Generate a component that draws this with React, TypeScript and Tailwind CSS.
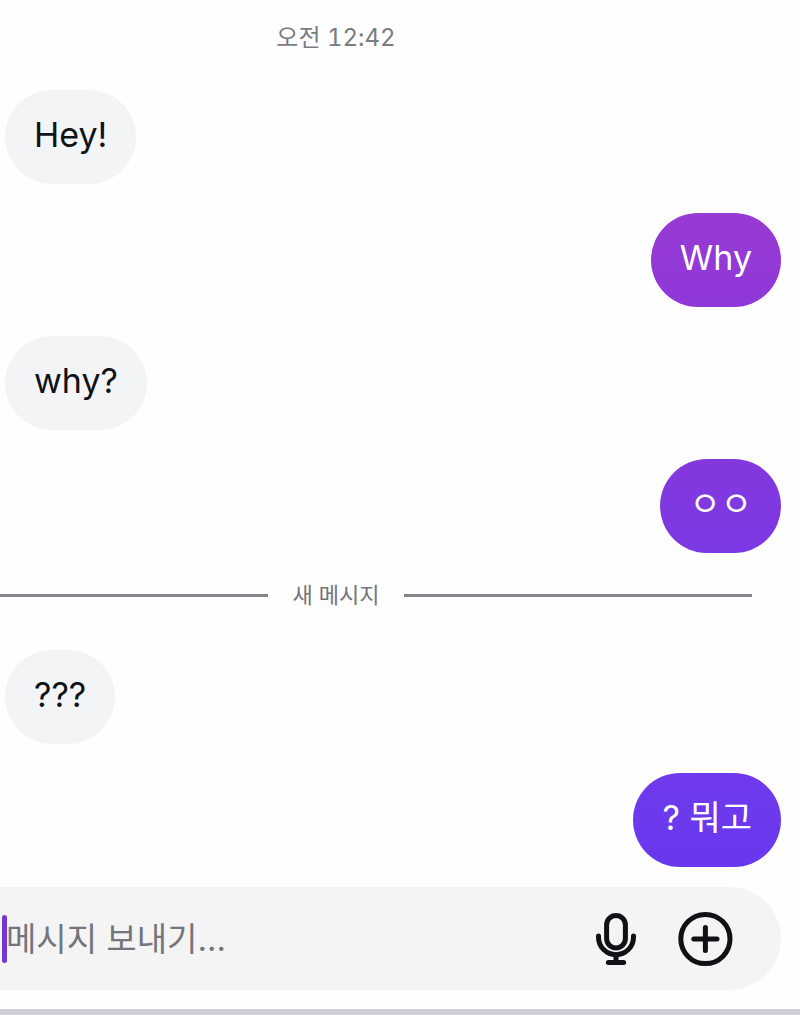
import { useState } from "react";
import clsx from "clsx";

type Message = {
    id: number;
    text: string;
    mine: boolean;
    color?: string;
};

const readMessages: Message[] = [
    { id: 1, text: "Hey!", mine: false },
    { id: 2, text: "Why", mine: true, color: "from-[#983ad3] to-[#8e38d9]" },
    { id: 3, text: "why?", mine: false },
    { id: 4, text: "ㅇㅇ", mine: true, color: "from-[#8438de] to-[#7c38e4]" },
];

const newMessages: Message[] = [
    { id: 5, text: "???", mine: false },
    { id: 6, text: "? 뭐고", mine: true, color: "from-[#703aec] to-[#6838ee]" },
];

export default function App() {
    const [draft, setDraft] = useState("");

    return (
        <main className="overflow-hidden bg-[#fefefe] font-[Inter,'Noto_Sans_CJK_KR',sans-serif]">
            <div className="-ml-20 mr-12 pt-5 text-center text-2xl leading-9 text-[#7b7c80] tabular-nums">
                <time>오전 12:42</time>
            </div>

            <MessageList messages={readMessages} className="pt-[34px]" />

            {/* New message divider */}
            <div className="-ml-20 mr-12 mt-6 flex items-center gap-6">
                <div className="h-[3px] flex-1 bg-[#85868c]" />
                <span className="text-[22px] leading-9 text-[#73747c]">새 메시지</span>
                <div className="h-[3px] flex-1 bg-[#85868c]" />
            </div>

            <MessageList messages={newMessages} className="pt-[37px]" />

            {/* Composer */}
            <form
                onSubmit={(e) => e.preventDefault()}
                className="relative mr-[19px] mt-5 flex h-[103px] items-center rounded-r-full bg-[#f4f4f4] pr-12"
            >
                {!draft && <span className="absolute left-0.5 top-7 h-12 w-[5px] rounded-full bg-[#7438d0]" />}
                <input
                    type="text"
                    aria-label="메시지 보내기"
                    value={draft}
                    onChange={(e) => setDraft(e.target.value)}
                    placeholder="메시지 보내기..."
                    className="min-w-0 flex-1 bg-transparent pl-1.5 text-[33px] leading-12 text-[#101216] caret-[#7438d0] outline-none placeholder:text-[#74757c]"
                />
                <div className="flex items-center gap-[41px] text-[#0f1115]">
                    <button type="button" aria-label="음성 메시지">
                        <MicIcon />
                    </button>
                    <button type="button" aria-label="더 보기">
                        <PlusIcon />
                    </button>
                </div>
            </form>

            <div className="mt-[19px] h-1.5 bg-[#cdcfd7]" />
        </main>
    );
}

function MessageList({ messages, className }: { messages: Message[]; className: string }) {
    return (
        <ul className={clsx("flex flex-col gap-[29px] pl-[5px] pr-[19px]", className)}>
            {messages.map((message) => (
                <li
                    key={message.id}
                    className={clsx(
                        "rounded-[47px] px-[29px] pb-[25px] pt-[21px] text-[34px] leading-12",
                        message.mine
                            ? clsx("self-end bg-linear-to-b text-white", message.color)
                            : "self-start bg-[#f3f4f6] text-[#101216]"
                    )}
                >
                    {message.text}
                </li>
            ))}
        </ul>
    );
}

function MicIcon() {
    return (
        <svg
            className="h-13 w-10"
            viewBox="0 0 40 52"
            fill="none"
            stroke="currentColor"
            strokeWidth="5"
            strokeLinecap="round"
        >
            <rect x="10.6" y="2.5" width="18.8" height="32.4" rx="9.4" />
            <path d="M2.5 23v1.2a17.5 17.5 0 0 0 35 0V23" />
            <path d="M20 42v7M12.4 49.4h15.2" />
        </svg>
    );
}

function PlusIcon() {
    return (
        <svg
            className="size-14"
            viewBox="0 0 56 56"
            fill="none"
            stroke="currentColor"
            strokeWidth="5"
            strokeLinecap="round"
        >
            <circle cx="28.4" cy="28" r="24.6" />
            <path d="M28.4 16.4v23.2M16.8 28h23.2" />
        </svg>
    );
}
